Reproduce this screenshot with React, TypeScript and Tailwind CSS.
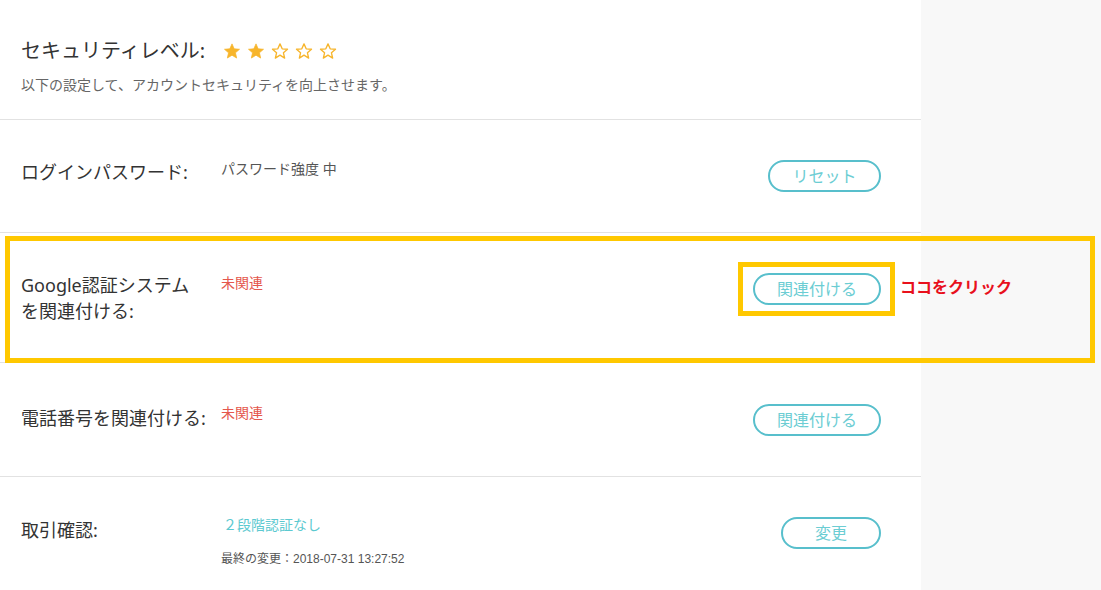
const jp = "font-['Noto_Sans','Noto_Sans_CJK_JP',sans-serif]";
const small = "font-['Liberation_Sans','Noto_Sans_CJK_JP',sans-serif]";

const Star = ({ filled }: { filled: boolean }) => (
  <svg width="18" height="18" viewBox="0 0 24 24" className="block">
    <path
      d="M12 2.5l2.9 6.6 7.1.6-5.4 4.7 1.6 7-6.2-3.8-6.2 3.8 1.6-7L2 9.7l7.1-.6z"
      fill={filled ? "#f7b52c" : "none"}
      stroke="#f7b52c"
      strokeWidth={filled ? 1 : 1.8}
      strokeLinejoin="round"
    />
  </svg>
);

const OutlineButton = ({ label, width }: { label: string; width: string }) => (
  <button
    className={`${width} h-[32px] rounded-full border-2 border-[#58bfcc] bg-white text-[16px] leading-none text-[#6ccdd3] ${jp}`}
  >
    {label}
  </button>
);

export default function App() {
  return (
    <div className="relative flex w-[1101px] h-[590px] overflow-hidden bg-[#f8f8f8]">
      <div className="w-[921px] bg-white">
        {/* header */}
        <div className="h-[120px] border-b border-[#e2e2e2] pl-[21px] pt-[37px]">
          <div className="flex items-center">
            <span className={`text-[20px] leading-[28px] text-[#333] ${jp}`}>セキュリティレベル:</span>
            <div className="ml-[18px] flex gap-[6px]">
              <Star filled />
              <Star filled />
              <Star filled={false} />
              <Star filled={false} />
              <Star filled={false} />
            </div>
          </div>
          <div className={`mt-[10px] text-[14px] leading-[20px] text-[#666] ${jp}`}>
            以下の設定して、アカウントセキュリティを向上させます。
          </div>
        </div>

        {/* login password */}
        <div className="flex h-[113px] items-start border-b border-[#e2e2e2] pl-[21px] pr-[40px] pt-[39px]">
          <div className={`w-[200px] text-[18px] leading-[26px] text-[#333] ${jp}`}>ログインパスワード:</div>
          <div className={`flex-1 text-[14px] leading-[20px] text-[#555] ${jp}`}>パスワード強度 中</div>
          <div className="mt-[1px]">
            <OutlineButton label="リセット" width="w-[113px]" />
          </div>
        </div>

        {/* google auth */}
        <div className="flex h-[130px] items-start border-b border-[#e2e2e2] pl-[21px] pr-[40px] pt-[39px]">
          <div className={`w-[200px] text-[18px] leading-[26px] text-[#333] ${jp}`}>
            Google認証システム
            <br />
            を関連付ける:
          </div>
          <div className={`flex-1 mt-[1px] text-[14px] leading-[20px] text-[#e4574d] ${jp}`}>未関連</div>
          <div className="mt-[1px]">
            <OutlineButton label="関連付ける" width="w-[128px]" />
          </div>
        </div>

        {/* phone */}
        <div className="flex h-[114px] items-start border-b border-[#e2e2e2] pl-[21px] pr-[40px] pt-[42px]">
          <div className={`w-[200px] text-[18px] leading-[26px] text-[#333] ${jp}`}>電話番号を関連付ける:</div>
          <div className={`flex-1 -mt-[2px] text-[14px] leading-[20px] text-[#e4574d] ${jp}`}>未関連</div>
          <div className="-mt-[1px]">
            <OutlineButton label="関連付ける" width="w-[128px]" />
          </div>
        </div>

        {/* transaction confirm */}
        <div className="flex h-[113px] items-start pl-[21px] pr-[40px] pt-[40px]">
          <div className={`w-[200px] text-[18px] leading-[26px] text-[#333] ${jp}`}>取引確認:</div>
          <div className="flex-1 -mt-[2px]">
            <div className={`pl-[2px] text-[14px] leading-[20px] text-[#5cc9d0] ${jp}`}>２段階認証なし</div>
            <div className={`mt-[16px] text-[12px] leading-[16px] text-[#555] ${small}`}>
              最終の変更：2018-07-31 13:27:52
            </div>
          </div>
          <div>
            <OutlineButton label="変更" width="w-[100px]" />
          </div>
        </div>
      </div>

      {/* annotation overlays */}
      <div className="pointer-events-none absolute left-[5px] top-[236px] h-[127px] w-[1090px] border-[5px] border-[#ffc800]" />
      <div className="pointer-events-none absolute left-[738px] top-[262px] h-[54px] w-[157px] border-[5px] border-[#ffc800]" />
      <div
        className={`absolute left-[900px] top-[275px] text-[16px] font-bold leading-[24px] text-[#e8101c] ${jp}`}
      >
        ココをクリック
      </div>
    </div>
  );
}
